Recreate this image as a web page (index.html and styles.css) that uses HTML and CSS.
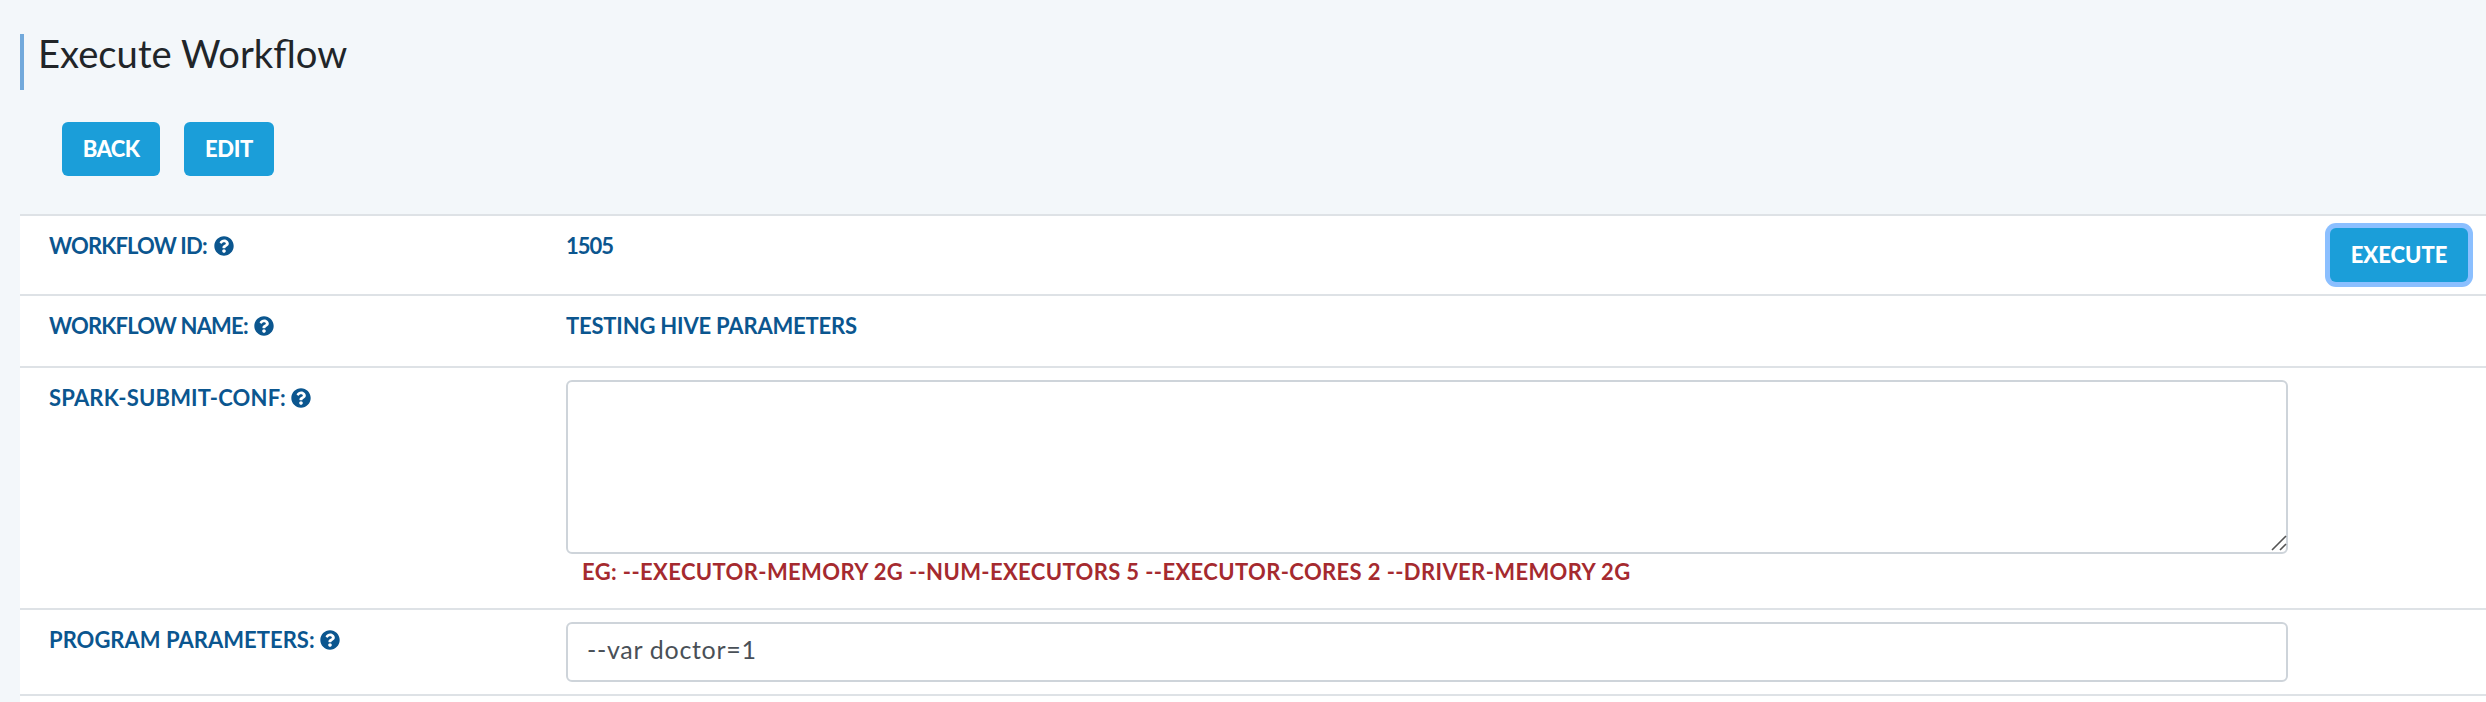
FILE: index.html
```
<!DOCTYPE html>
<html lang="en">
<head>
<meta charset="utf-8">
<title>Execute Workflow</title>
<link rel="stylesheet" href="styles.css">
</head>
<body>
<svg class="sprite" aria-hidden="true">
  <symbol id="help" viewBox="0 0 512 512"><path fill="currentColor" d="M504 256c0 136.997-111.043 248-248 248S8 392.997 8 256C8 119.083 119.043 8 256 8s248 111.083 248 248zM262.655 90c-54.497 0-89.255 22.957-116.549 63.758-3.536 5.286-2.353 12.415 2.715 16.258l34.699 26.31c5.205 3.947 12.621 3.008 16.665-2.122 17.864-22.658 30.113-35.797 57.303-35.797 20.429 0 45.698 13.148 45.698 32.958 0 14.976-12.363 22.667-32.534 33.976C247.128 238.528 216 254.941 216 296v4c0 6.627 5.373 12 12 12h56c6.627 0 12-5.373 12-12v-1.333c0-28.462 83.186-29.647 83.186-106.667 0-58.002-60.165-102-116.531-102zM256 338c-25.365 0-46 20.635-46 46 0 25.364 20.635 46 46 46s46-20.636 46-46c0-25.365-20.635-46-46-46z"/></symbol>
</svg>
<main class="page">
  <h1 class="title">Execute Workflow</h1>
  <div class="actions">
    <button class="btn btn-back">BACK</button>
    <button class="btn btn-edit">EDIT</button>
  </div>
  <form class="rows">
    <div class="row row-id">
      <div class="label"><span>WORKFLOW ID:</span><svg class="help"><use href="#help"/></svg></div>
      <div class="value">1505</div>
      <div class="run"><button type="button" class="btn btn-execute">EXECUTE</button></div>
    </div>
    <div class="row row-name">
      <div class="label"><span>WORKFLOW NAME:</span><svg class="help"><use href="#help"/></svg></div>
      <div class="value">TESTING HIVE PARAMETERS</div>
    </div>
    <div class="row row-conf">
      <div class="label"><span>SPARK-SUBMIT-CONF:</span><svg class="help"><use href="#help"/></svg></div>
      <div class="field">
        <div class="area-wrap">
          <textarea class="textarea"></textarea>
          <svg class="grip" viewBox="0 0 16 16"><path d="M1 15 15 1M9 15l6-6" fill="none" stroke="#555" stroke-width="1.6"/></svg>
        </div>
        <p class="hint">EG: --EXECUTOR-MEMORY 2G --NUM-EXECUTORS 5 --EXECUTOR-CORES 2 --DRIVER-MEMORY 2G</p>
      </div>
    </div>
    <div class="row row-params">
      <div class="label"><span>PROGRAM PARAMETERS:</span><svg class="help"><use href="#help"/></svg></div>
      <div class="field"><div class="input">--var doctor=1</div></div>
    </div>
  </form>
</main>
</body>
</html>
```
FILE: styles.css
```
* { box-sizing: border-box; }
body { margin: 0; background: #f3f7fa; font-family: Lato, sans-serif; color: #212529; }
.sprite { display: none; }
.page { padding: 34px 0 0 20px; height: 702px; overflow: hidden; }
.title { margin: 0; height: 56px; padding-left: 14px; border-left: 4px solid #72a9db; font-size: 38.2px; font-weight: 400; line-height: 38px; }
.actions { display: flex; gap: 24px; padding: 32px 0 38px 42px; }
.btn { height: 54px; padding: 0; border: 0; border-radius: 6px; background: #1b9ed9; color: #fff; font: 900 22px/54px Lato, sans-serif; }
.btn-back { width: 98px; letter-spacing: -0.6px; }
.btn-edit { width: 90px; letter-spacing: -0.3px; }
.btn-execute { width: 138px; box-shadow: 0 0 0 5px #8bbfff; }
.rows { background: #fff; height: 488px; }
.row { display: grid; grid-template-columns: 546px 1722px 1fr; border-top: 2px solid #dee2e6; font-size: 22px; font-weight: 700; line-height: 32px; color: #0b568f; }
.row-id { height: 80px; }
.row-name { height: 72px; }
.row-conf { height: 242px; }
.row-params { height: 88px; border-bottom: 2px solid #dee2e6; }
.label { display: flex; padding: 14px 0 0 29px; }
.label span { flex: none; white-space: nowrap; }
.row-id .label span { width: 165px; letter-spacing: -0.84px; }
.row-name .label span { width: 205px; letter-spacing: -0.82px; }
.row-conf .label span { width: 242px; letter-spacing: 0.17px; }
.row-params .label span { width: 271px; letter-spacing: 0.02px; }
.value { padding-top: 14px; }
.row-id .value { letter-spacing: -1.05px; }
.row-name .value { letter-spacing: -0.2px; }
.help { width: 20px; height: 20px; margin-top: 6px; flex: none; }
.run { padding: 12px 0 0 42px; }
.field { padding-top: 12px; }
.area-wrap { position: relative; height: 174px; }
.textarea, .input { border: 2px solid #ced4da; border-radius: 6px; background: #fff; }
.textarea { display: block; width: 100%; height: 174px; resize: none; outline: none; }
.grip { position: absolute; right: 1px; bottom: 3px; width: 16px; height: 16px; }
.input { height: 60px; padding-left: 19px; font-size: 25px; font-weight: 400; line-height: 50px; letter-spacing: 0.7px; color: #495057; }
.hint { margin: 2px 0 0; padding-left: 16px; color: #a52a2f; letter-spacing: 0.385px; white-space: nowrap; }
```
